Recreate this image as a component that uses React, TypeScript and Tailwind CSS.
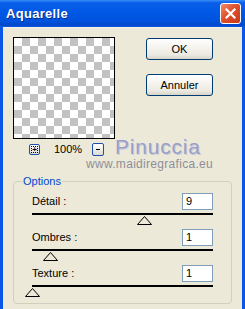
import React from "react";

const font = { fontFamily: '"Liberation Sans", Arial, sans-serif' };

function Triangle({ left }: { left: number }) {
  return (
    <svg
      className="absolute top-[1px]"
      style={{ left }}
      width="15"
      height="9"
      viewBox="0 0 15 9"
    >
      <polygon points="7.5,0.5 14.5,8.5 0.5,8.5" fill="#ece9d8" stroke="#000" strokeWidth="1" />
    </svg>
  );
}

function SliderRow({ label, value, thumb }: { label: string; value: string; thumb: number }) {
  return (
    <div>
      <div className="flex items-center justify-between h-[17px]">
        <span className="text-[11px] text-black leading-none">{label}</span>
        <div className="w-[31px] h-[17px] border border-[#7f9db9] bg-white text-[11px] leading-[15px] pl-[3px] text-black">
          {value}
        </div>
      </div>
      <div className="relative mt-[3px] h-[16px] border-t-2 border-black">
        <Triangle left={thumb} />
      </div>
    </div>
  );
}

function XpButton({ children }: { children: React.ReactNode }) {
  return (
    <button className="w-[67px] h-[22px] rounded-[3px] border border-[#003c74] bg-[linear-gradient(to_bottom,#ffffff_0%,#f5f4ef_40%,#ebe9e0_80%,#d8d4c8_100%)] text-[11px] text-black flex items-center justify-center">
      {children}
    </button>
  );
}

export default function App() {
  return (
    <div className="w-[245px] h-[309px] flex flex-col bg-[#0a56e6] overflow-hidden select-none" style={font}>
      {/* Title bar */}
      <div className="relative h-[27px] shrink-0 flex items-center bg-[linear-gradient(to_bottom,#3c8ff6_0%,#0a5fe9_10%,#0058e6_45%,#0052dc_80%,#0047c8_92%,#0a56e6_100%)]">
        <span className="ml-[6px] mt-[1px] text-[13px] font-bold text-white tracking-[0.3px] [text-shadow:1px_1px_0_#0b2a8c]">
          Aquarelle
        </span>
        <div className="absolute right-[4px] top-[3px] w-[21px] h-[21px] rounded-[3px] border border-white bg-[linear-gradient(135deg,#f08a6a_0%,#e0502c_45%,#c8381a_100%)] flex items-center justify-center">
          <svg width="11" height="11" viewBox="0 0 11 11">
            <path d="M1.5 1.5 L9.5 9.5 M9.5 1.5 L1.5 9.5" stroke="#fff" strokeWidth="2.2" strokeLinecap="square" />
          </svg>
        </div>
      </div>

      {/* Body */}
      <div className="relative flex-1 mx-[3px] bg-[#ece9d8] border-t border-[#f3f1e8]">
        <div className="flex pt-[9px] pl-[10px]">
          <div className="flex flex-col">
            <div className="w-[102px] h-[102px] border border-black bg-[image:repeating-conic-gradient(#c2c2c2_0%_25%,#ffffff_0%_50%)] bg-[length:16px_16px] bg-[position:0px_0px]" />
            <div className="flex items-center mt-[4px] pl-[16px] h-[13px]">
              <div className="w-[11px] h-[11px] rounded-[2px] border border-[#1d4fb0] bg-[linear-gradient(to_bottom,#ffffff,#dcdcd4)] flex items-center justify-center">
                <div className="w-[7px] h-[7px] border border-dotted border-black flex items-center justify-center text-[8px] leading-none font-bold">
                  +
                </div>
              </div>
              <span className="ml-[14px] text-[11px] text-black leading-none">100%</span>
              <div className="ml-[10px] w-[12px] h-[13px] rounded-[2px] border border-[#1d4fb0] bg-[linear-gradient(to_bottom,#ffffff,#dcdcd4)] flex items-center justify-center">
                <div className="w-[4px] h-[1px] bg-black" />
              </div>
            </div>
          </div>
          <div className="flex flex-col ml-[31px] mt-[1px] gap-[14px]">
            <XpButton>OK</XpButton>
            <XpButton>Annuler</XpButton>
          </div>
        </div>

        {/* Options group */}
        <div className="relative mx-[10px] mt-[25px] h-[123px] rounded-[4px] border border-[#d0d0bf] px-[18px] pt-[11px]">
          <span className="absolute -top-[7px] left-[8px] px-[1px] bg-[#ece9d8] text-[11px] leading-[13px] text-[#0046d5]">
            Options
          </span>
          <SliderRow label="Détail :" value="9" thumb={105} />
          <SliderRow label="Ombres :" value="1" thumb={11} />
          <SliderRow label="Texture :" value="1" thumb={-7} />
        </div>

        {/* Watermark */}
        <div className="absolute left-[112px] top-[108px] text-[21px] leading-none tracking-[0.8px] text-[#9a9fc8] [text-shadow:1px_1px_0_#c9cbd9]">
          Pinuccia
        </div>
        <div className="absolute left-[83px] top-[130px] text-[12px] leading-none tracking-[0.3px] text-[#8e8e98]">
          www.maidiregrafica.eu
        </div>
      </div>
    </div>
  );
}
